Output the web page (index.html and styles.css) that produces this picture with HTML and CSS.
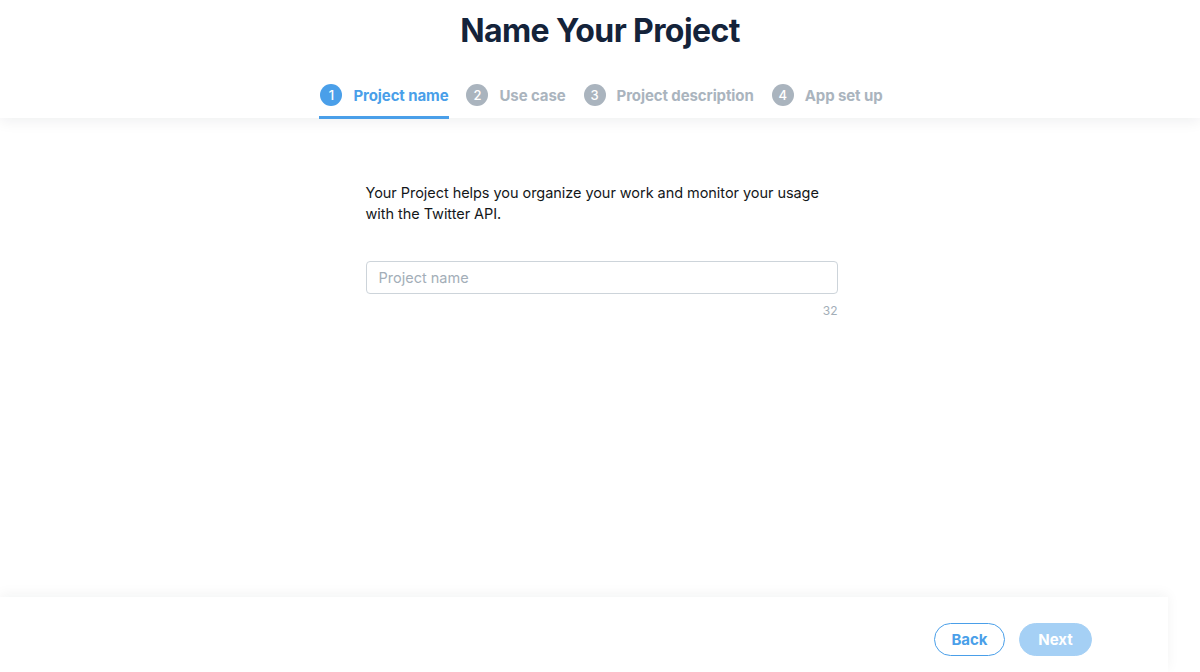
FILE: index.html
```html
<!DOCTYPE html>
<html lang="en">
<head>
    <meta charset="UTF-8">
    <meta name="viewport" content="width=device-width, initial-scale=1.0">
    <title>Name Your Project</title>
    <link rel="stylesheet" href="styles.css">
</head>
<body>
    <header class="top">
        <h1>Name Your Project</h1>
        <nav class="steps">
            <div class="step active"><span class="num">1</span><span class="label">Project name</span></div>
            <div class="step"><span class="num">2</span><span class="label">Use case</span></div>
            <div class="step"><span class="num">3</span><span class="label">Project description</span></div>
            <div class="step"><span class="num">4</span><span class="label">App set up</span></div>
        </nav>
    </header>

    <main class="content">
        <div class="form">
            <p class="intro">Your Project helps you organize your work and monitor your usage with the Twitter API.</p>
            <input class="name-input" type="text" placeholder="Project name" maxlength="32">
            <div class="counter">32</div>
        </div>
    </main>

    <footer class="bottom">
        <button class="btn btn-back">Back</button>
        <button class="btn btn-next" disabled>Next</button>
    </footer>
</body>
</html>
```

FILE: styles.css
```css
* {
    margin: 0;
    padding: 0;
    box-sizing: border-box;
    font-family: 'Inter', 'Helvetica Neue', Arial, sans-serif;
}
body {
    background: #fff;
    height: 672px;
    display: flex;
    flex-direction: column;
    color: #14171a;
    overflow: hidden;
}
.top {
    background: #fff;
    height: 118px;
    display: flex;
    flex-direction: column;
    align-items: center;
    box-shadow: 0 3px 14px rgba(20, 30, 45, 0.07);
    position: relative;
    z-index: 1;
}
h1 {
    font-size: 32px;
    font-weight: 700;
    color: #14233a;
    letter-spacing: -0.6px;
    line-height: 40px;
    margin-top: 11px;
}
.steps {
    display: flex;
    gap: 16px;
    margin-top: 33px;
    padding-left: 3px;
}
.step {
    display: flex;
    align-items: center;
    gap: 11px;
    padding: 0 1px 10px;
    border-bottom: 3px solid transparent;
    color: #aab4be;
    font-size: 15px;
    font-weight: 700;
    letter-spacing: -0.1px;
}
.step .num {
    width: 22px;
    height: 22px;
    border-radius: 50%;
    background: #aab4be;
    color: #fff;
    font-size: 13px;
    font-weight: 500;
    display: flex;
    align-items: center;
    justify-content: center;
}
.step.active {
    color: #4a9fe9;
    border-bottom-color: #4a9fe9;
}
.step.active .num {
    background: #4a9fe9;
}
.content {
    flex: 1;
    display: flex;
    justify-content: center;
    padding: 64px 0 0 3px;
}
.form {
    width: 472px;
}
.intro {
    font-size: 14.5px;
    line-height: 21px;
    color: #14171a;
    letter-spacing: -0.05px;
}
.name-input {
    display: block;
    width: 100%;
    height: 33px;
    margin-top: 37px;
    border: 1px solid #cdd4da;
    border-radius: 4px;
    padding: 0 12px;
    font-size: 14.5px;
    color: #14171a;
    outline: none;
}
.name-input::placeholder {
    color: #a3aeb8;
}
.counter {
    text-align: right;
    font-size: 12px;
    color: #a3aeb8;
    margin-top: 9px;
}
.bottom {
    height: 75px;
    width: 1168px;
    display: flex;
    justify-content: flex-end;
    align-items: flex-start;
    gap: 14px;
    padding: 26px 76px 0 0;
    box-shadow: 0 -3px 12px rgba(20, 30, 45, 0.05);
}
.btn {
    height: 33px;
    border-radius: 17px;
    font-size: 15px;
    font-weight: 700;
    padding: 0 16px;
    cursor: pointer;
}
.btn-back {
    background: #fff;
    color: #4a9fe9;
    border: 1px solid #4a9fe9;
    width: 71px;
}
.btn-next {
    background: #a5d0f5;
    color: #fff;
    border: 1px solid #a5d0f5;
    width: 73px;
    cursor: default;
}
```
